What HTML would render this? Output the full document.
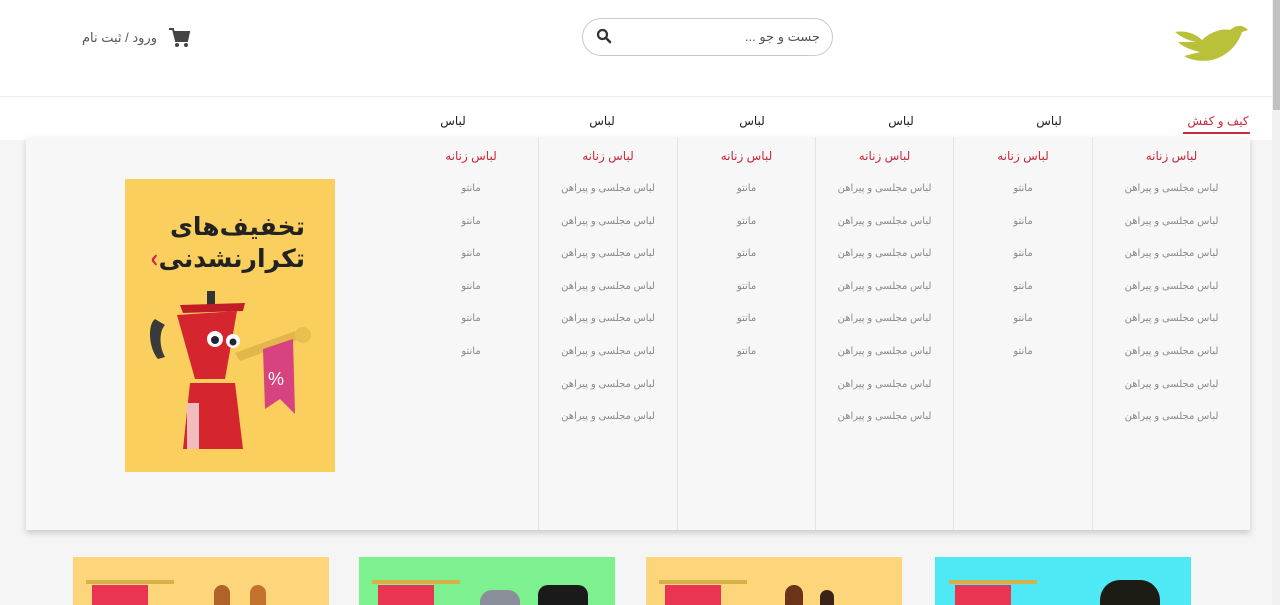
<!DOCTYPE html>
<html><head><meta charset="utf-8">
<style>
*{margin:0;padding:0;box-sizing:border-box}
body{width:1280px;height:605px;overflow:hidden;background:#f5f5f5;font-family:"Liberation Sans","DejaVu Sans",sans-serif;position:relative}
.a{position:absolute}
.hdr{left:0;top:0;width:1272px;height:140px;background:#fff}
.line{left:0;top:96px;width:1272px;height:1px;background:#ececec}
.nav{top:114px;font-size:12px;color:#222;width:80px;text-align:center;direction:rtl}
.panel{left:26px;top:137px;width:1224px;height:393px;background:#f7f7f7;box-shadow:0 3px 6px rgba(0,0,0,.18)}
.col{top:137px;height:393px;border-left:1px solid #e4e4e4;direction:rtl;text-align:center}
.col h4{font-size:12px;color:#c82a3e;font-weight:normal;margin-top:12px;height:24px}
.col p{font-size:10px;color:#8a8a8a;height:32.6px;line-height:32.6px}
.card{top:557px;width:256px;height:48px}
</style></head><body>
<div class="a hdr"></div>
<div class="a line"></div>
<!-- logo -->
<svg class="a" style="left:1172px;top:18px" width="80" height="48" viewBox="0 0 80 48">
<path d="M3 14 C14 12 24 16 30 22 C38 14 50 10 58 12 C64 7 70 6 76 12 L70 14 C66 26 56 38 40 42 C28 44 18 42 12 38 L28 34 C18 32 10 28 6 24 L24 24 C14 22 8 18 3 14Z" fill="#b9c13a"/>
</svg>
<!-- search -->
<div class="a" style="left:582px;top:18px;width:251px;height:38px;border:1px solid #c9c9c9;border-radius:19px;background:#fff"></div>
<div class="a" style="left:700px;top:29px;width:120px;text-align:right;direction:rtl;font-size:13px;color:#555">جست و جو ...</div>
<svg class="a" style="left:596px;top:28px" width="16" height="16" viewBox="0 0 16 16"><circle cx="6.5" cy="6.5" r="4.5" fill="none" stroke="#333" stroke-width="2.2"/><path d="M10 10 L14 14" stroke="#333" stroke-width="2.6" stroke-linecap="round"/></svg>
<!-- cart -->
<svg class="a" style="left:169px;top:28px" width="22" height="20" viewBox="0 0 22 20"><path d="M0 1 H4 L7 13 H18 L20 4 H5" fill="none" stroke="#444" stroke-width="2"/><path d="M5 4 H20 L18 12 H7Z" fill="#444"/><circle cx="8" cy="17" r="2" fill="#444"/><circle cx="17" cy="17" r="2" fill="#444"/></svg>
<div class="a" style="left:60px;top:30px;width:97px;text-align:right;direction:rtl;font-size:13px;color:#555">ورود / ثبت نام</div>
<!-- nav -->
<div class="a nav" style="left:1178px;color:#c82a3e">کیف و کفش</div>
<div class="a" style="left:1183px;top:132px;width:67px;height:2px;background:#c82a3e"></div>
<div class="a nav" style="left:1009px">لباس</div>
<div class="a nav" style="left:861px">لباس</div>
<div class="a nav" style="left:712px">لباس</div>
<div class="a nav" style="left:562px">لباس</div>
<div class="a nav" style="left:413px">لباس</div>
<div class="a panel"></div>
<div class="a col" style="left:1092px;width:158px"><h4>لباس زنانه</h4><p>لباس مجلسی و پیراهن</p><p>لباس مجلسی و پیراهن</p><p>لباس مجلسی و پیراهن</p><p>لباس مجلسی و پیراهن</p><p>لباس مجلسی و پیراهن</p><p>لباس مجلسی و پیراهن</p><p>لباس مجلسی و پیراهن</p><p>لباس مجلسی و پیراهن</p></div>
<div class="a col" style="left:953px;width:139px"><h4>لباس زنانه</h4><p>مانتو</p><p>مانتو</p><p>مانتو</p><p>مانتو</p><p>مانتو</p><p>مانتو</p></div>
<div class="a col" style="left:815px;width:138px"><h4>لباس زنانه</h4><p>لباس مجلسی و پیراهن</p><p>لباس مجلسی و پیراهن</p><p>لباس مجلسی و پیراهن</p><p>لباس مجلسی و پیراهن</p><p>لباس مجلسی و پیراهن</p><p>لباس مجلسی و پیراهن</p><p>لباس مجلسی و پیراهن</p><p>لباس مجلسی و پیراهن</p></div>
<div class="a col" style="left:677px;width:138px"><h4>لباس زنانه</h4><p>مانتو</p><p>مانتو</p><p>مانتو</p><p>مانتو</p><p>مانتو</p><p>مانتو</p></div>
<div class="a col" style="left:538px;width:139px"><h4>لباس زنانه</h4><p>لباس مجلسی و پیراهن</p><p>لباس مجلسی و پیراهن</p><p>لباس مجلسی و پیراهن</p><p>لباس مجلسی و پیراهن</p><p>لباس مجلسی و پیراهن</p><p>لباس مجلسی و پیراهن</p><p>لباس مجلسی و پیراهن</p><p>لباس مجلسی و پیراهن</p></div>
<div class="a col" style="left:404px;width:134px;border-left:none"><h4>لباس زنانه</h4><p>مانتو</p><p>مانتو</p><p>مانتو</p><p>مانتو</p><p>مانتو</p><p>مانتو</p></div>
<!-- banner -->
<div class="a" style="left:125px;top:179px;width:210px;height:293px;background:#fbcf5e;overflow:hidden">
<div class="a" style="left:10px;top:30px;width:170px;text-align:right;direction:rtl;font-size:25px;font-weight:bold;color:#222;line-height:32px;font-family:'Noto Sans CJK SC','DejaVu Sans',sans-serif">تخفیف‌های<br>تکرارنشدنی<span style="color:#d2234a">›</span></div>
<svg class="a" style="left:0;top:100px" width="210" height="193" viewBox="0 0 210 193">
<path d="M30 40 C22 46 24 70 33 80 L40 78 C34 68 34 52 40 46Z" fill="#3a3a3a"/>
<rect x="82" y="12" width="8" height="14" fill="#333"/>
<path d="M55 26 L120 24 L118 32 L58 34Z" fill="#c01d26"/>
<path d="M52 36 L112 32 L100 100 L70 100Z" fill="#d52630"/>
<path d="M65 104 L110 104 L118 170 L58 170Z" fill="#d52630"/>
<rect x="62" y="124" width="12" height="46" fill="#f1bcc0"/>
<circle cx="90" cy="60" r="8" fill="#fff"/><circle cx="108" cy="62" r="7" fill="#fff"/>
<circle cx="90" cy="61" r="4" fill="#223"/><circle cx="108" cy="63" r="3.5" fill="#223"/>
<path d="M110 74 L170 52 L175 60 L115 82Z" fill="#e2b64a"/>
<circle cx="178" cy="56" r="8" fill="#e8c04e"/>
<path d="M138 70 L168 60 L170 135 L155 120 L140 130Z" fill="#d6437f"/>
<text x="143" y="106" font-size="18" fill="#fff" font-family="Liberation Sans">%</text>
</svg>
</div>
<!-- cards -->
<div class="a card" style="left:73px;background:#fdd57a"></div>
<div class="a card" style="left:359px;background:#7df08f"></div>
<div class="a card" style="left:646px;background:#fdd57a"></div>
<div class="a card" style="left:935px;background:#4fe9f5"></div>
<div class="a" style="left:92px;top:585px;width:56px;height:20px;background:#ea3552"></div>
<div class="a" style="left:378px;top:585px;width:56px;height:20px;background:#ea3552"></div>
<div class="a" style="left:665px;top:585px;width:56px;height:20px;background:#ea3552"></div>
<div class="a" style="left:955px;top:585px;width:56px;height:20px;background:#ea3552"></div>
<div class="a" style="left:86px;top:580px;width:88px;height:4px;background:#d8b04a"></div>
<div class="a" style="left:372px;top:580px;width:88px;height:4px;background:#d8b04a"></div>
<div class="a" style="left:659px;top:580px;width:88px;height:4px;background:#d8b04a"></div>
<div class="a" style="left:949px;top:580px;width:88px;height:4px;background:#d8b04a"></div>
<div class="a" style="left:214px;top:585px;width:16px;height:20px;border-radius:8px 8px 0 0;background:#b0622a"></div>
<div class="a" style="left:250px;top:585px;width:16px;height:20px;border-radius:8px 8px 0 0;background:#c4712e"></div>
<div class="a" style="left:480px;top:590px;width:40px;height:15px;border-radius:12px 12px 0 0;background:#8a8f9a"></div>
<div class="a" style="left:538px;top:585px;width:50px;height:20px;border-radius:10px 10px 0 0;background:#1a1a1a"></div>
<div class="a" style="left:785px;top:585px;width:18px;height:20px;border-radius:9px 9px 0 0;background:#6b3318"></div>
<div class="a" style="left:820px;top:590px;width:14px;height:15px;border-radius:7px 7px 0 0;background:#3a2418"></div>
<div class="a" style="left:1100px;top:580px;width:60px;height:25px;border-radius:20px 20px 0 0;background:#1c1c14"></div>
<!-- scrollbar -->
<div class="a" style="left:1272px;top:0;width:8px;height:605px;background:#f1f1f1"></div>
<div class="a" style="left:1273px;top:0;width:7px;height:110px;background:#c1c1c1"></div>
</body></html>
